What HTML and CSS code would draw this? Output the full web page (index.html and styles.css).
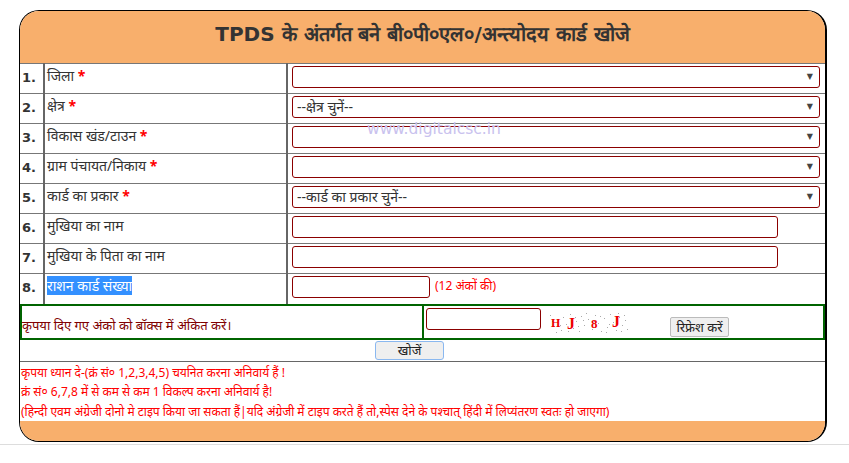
FILE: index.html
```html
<!DOCTYPE html>
<html lang="hi">
<head>
<meta charset="utf-8">
<title>TPDS कार्ड खोजे</title>
<link rel="stylesheet" href="styles.css">
</head>
<body>
<div class="wrap">
  <div class="head">TPDS के अंतर्गत बने बी०पी०एल०/अन्त्योदय कार्ड खोजे</div>
  <table class="form">
    <colgroup><col class="c-num"><col class="c-label"><col class="c-field"></colgroup>
    <tr class="row">
      <td class="num">1.</td>
      <td class="label">जिला <span class="req">*</span></td>
      <td class="field"><div class="sel"><div class="sel-box"></div></div></td>
    </tr>
    <tr class="row">
      <td class="num">2.</td>
      <td class="label">क्षेत्र <span class="req">*</span></td>
      <td class="field"><div class="sel"><div class="sel-box">--क्षेत्र चुनें--</div></div></td>
    </tr>
    <tr class="row">
      <td class="num">3.</td>
      <td class="label">विकास खंड/टाउन <span class="req">*</span></td>
      <td class="field"><div class="sel"><div class="sel-box"></div></div></td>
    </tr>
    <tr class="row">
      <td class="num">4.</td>
      <td class="label">ग्राम पंचायत/निकाय <span class="req">*</span></td>
      <td class="field"><div class="sel"><div class="sel-box"></div></div></td>
    </tr>
    <tr class="row">
      <td class="num">5.</td>
      <td class="label">कार्ड का प्रकार <span class="req">*</span></td>
      <td class="field"><div class="sel"><div class="sel-box">--कार्ड का प्रकार चुनें--</div></div></td>
    </tr>
    <tr class="row">
      <td class="num">6.</td>
      <td class="label">मुखिया का नाम</td>
      <td class="field"><div class="txt txt-wide"></div></td>
    </tr>
    <tr class="row">
      <td class="num">7.</td>
      <td class="label">मुखिया के पिता का नाम</td>
      <td class="field"><div class="txt txt-wide"></div></td>
    </tr>
    <tr class="row">
      <td class="num">8.</td>
      <td class="label"><span class="hl">राशन कार्ड संख्या</span></td>
      <td class="field"><div class="row8"><div class="txt txt-short"></div><span class="hint">(12 अंकों की)</span></div></td>
    </tr>
    <tr>
      <td colspan="3" class="cap-cell">
        <div class="cap">
          <div class="cap-left">कृपया दिए गए अंको को बॉक्स में अंकित करें।</div>
          <div class="cap-right">
            <div class="txt txt-cap"></div>
            <svg class="cap-img" width="82" height="22" viewBox="0 0 82 22">
              <g fill="#aaa">
                <rect x="2" y="3" width="1" height="1"/><rect x="6" y="14" width="1" height="1"/><rect x="10" y="8" width="1" height="1"/>
                <rect x="13" y="18" width="1" height="1"/><rect x="15" y="5" width="1" height="1"/><rect x="18" y="12" width="1" height="1"/>
                <rect x="22" y="2" width="1" height="1"/><rect x="25" y="16" width="1" height="1"/><rect x="28" y="9" width="1" height="1"/>
                <rect x="31" y="19" width="1" height="1"/><rect x="33" y="4" width="1" height="1"/><rect x="36" y="13" width="1" height="1"/>
                <rect x="40" y="7" width="1" height="1"/><rect x="44" y="17" width="1" height="1"/><rect x="47" y="3" width="1" height="1"/>
                <rect x="50" y="11" width="1" height="1"/><rect x="53" y="19" width="1" height="1"/><rect x="56" y="6" width="1" height="1"/>
                <rect x="59" y="15" width="1" height="1"/><rect x="62" y="2" width="1" height="1"/><rect x="65" y="10" width="1" height="1"/>
                <rect x="68" y="18" width="1" height="1"/><rect x="71" y="5" width="1" height="1"/><rect x="74" y="13" width="1" height="1"/>
                <rect x="77" y="8" width="1" height="1"/><rect x="79" y="17" width="1" height="1"/><rect x="8" y="20" width="1" height="1"/>
                <rect x="20" y="19" width="1" height="1"/><rect x="38" y="1" width="1" height="1"/><rect x="58" y="20" width="1" height="1"/>
                <rect x="70" y="1" width="1" height="1"/><rect x="46" y="9" width="1" height="1"/><rect x="27" y="5" width="1" height="1"/>
                <rect x="4" y="9" width="1" height="1"/><rect x="12" y="13" width="1" height="1"/><rect x="30" y="14" width="1" height="1"/>
                <rect x="35" y="8" width="1" height="1"/><rect x="52" y="4" width="1" height="1"/><rect x="61" y="12" width="1" height="1"/>
                <rect x="73" y="19" width="1" height="1"/><rect x="76" y="3" width="1" height="1"/><rect x="24" y="10" width="1" height="1"/>
              </g>
              <g fill="#e00" font-family="Liberation Serif, serif" font-weight="bold">
                <text x="3" y="15" font-size="12">H</text>
                <text x="19" y="17" font-size="16">J</text>
                <text x="43" y="16" font-size="13">8</text>
                <text x="64" y="15" font-size="16">J</text>
              </g>
            </svg>
            <button class="btn btn-refresh" type="button">रिफ्रेश करें</button>
          </div>
        </div>
      </td>
    </tr>
    <tr>
      <td colspan="3" class="submit-cell"><button class="btn btn-search" type="button">खोजें</button></td>
    </tr>
    <tr>
      <td colspan="3" class="notes">
        <p>कृपया ध्यान दे-(क्रं सं० 1,2,3,4,5) चयनित करना अनिवार्य हैं !</p>
        <p>क्रं सं० 6,7,8 में से कम से कम 1 विकल्प करना अनिवार्य है!</p>
        <p>(हिन्दी एवम अंग्रेजी दोनो मे टाइप किया जा सकता हैं|यदि अंग्रेजी में टाइप करते हैं तो,स्पेस देने के पश्चात् हिंदी में लिप्यंतरण स्वतः हो जाएगा)</p>
      </td>
    </tr>
  </table>
  <div class="foot"></div>
</div>
<div class="rule"></div>
<div class="watermark">www.digitalcsc.in</div>
</body>
</html>
```

FILE: styles.css
```css
html, body {
  margin: 0;
  padding: 0;
  background: #fff;
}
body {
  font-family: "Noto Sans", "DejaVu Sans", sans-serif;
  color: #333;
  position: relative;
}
.wrap {
  width: 808px;
  margin: 10px 0 0 19px;
  box-sizing: border-box;
  border: 1px solid #000;
  border-right-width: 2px;
  border-radius: 20px;
  overflow: hidden;
}
.head {
  background: #f8af6c;
  height: 52px;
  line-height: 46px;
  text-align: center;
  font-family: "DejaVu Sans", sans-serif;
  font-weight: bold;
  font-size: 20px;
  color: #333;
}
.form {
  width: 100%;
  border-collapse: collapse;
  table-layout: fixed;
}
.c-num { width: 24px; }
.c-label { width: 243px; }
.form td {
  padding: 0;
  vertical-align: top;
  box-sizing: border-box;
}
.row {
  height: 30px;
}
.row td {
  height: 30px;
  border-top: 1px solid #777;
}
.num {
  font-family: "DejaVu Sans", sans-serif;
  font-weight: bold;
  font-size: 13px;
  line-height: 18px;
  padding: 5px 0 0 2px !important;
  border-right: 2px solid #666;
}
.label {
  font-size: 14px;
  line-height: 20px;
  padding: 2px 0 0 2px !important;
  border-right: 2px solid #666;
  white-space: nowrap;
  overflow: hidden;
}
.req {
  color: #f00;
  font-weight: bold;
}
.hl {
  background: #3390ff;
  color: #fff;
}
.field {
  padding: 2px 0 0 4px !important;
}
.sel {
  position: relative;
  width: 528px;
}
.sel-box {
  height: 20px;
  border: 1px solid #8b0000;
  border-radius: 3px;
  font-size: 14px;
  line-height: 20px;
  padding-left: 4px;
  color: #333;
  overflow: hidden;
}
.sel::after {
  content: "▼";
  position: absolute;
  right: 7px;
  top: 5px;
  font-size: 8px;
  line-height: 10px;
  color: #444;
}
.txt {
  height: 20px;
  border: 1px solid #8b0000;
  border-radius: 3px;
  background: #fff;
}
.txt-wide { width: 484px; }
.txt-short { width: 136px; }
.row8 {
  display: flex;
  align-items: flex-start;
  gap: 5px;
}
.hint {
  color: #f00;
  font-size: 12px;
  line-height: 20px;
}
.cap {
  display: flex;
  border: 2px solid #006400;
  height: 32px;
}
.cap-left {
  width: 402px;
  border-right: 2px solid #006400;
  color: #800000;
  font-size: 13px;
  line-height: 18px;
  padding: 10px 0 0 0;
  box-sizing: border-box;
}
.cap-right {
  display: flex;
  align-items: flex-start;
  padding: 2px 0 0 2px;
}
.txt-cap {
  width: 113px;
}
.cap-img {
  margin: 4px 0 0 7px;
  display: block;
}
.btn {
  font-family: "Noto Sans", "DejaVu Sans", sans-serif;
  font-size: 13px;
  color: #222;
  background: #efefef;
  border: 1px solid #bbb;
  border-radius: 2px;
  padding: 0;
}
.btn-refresh {
  width: 59px;
  height: 20px;
  line-height: 18px;
  margin: 9px 0 0 40px;
}
.form td.submit-cell {
  height: 22px;
  padding: 1px 0 0 0;
  line-height: 0;
}
.btn-search {
  display: block;
  margin-left: 355px;
  width: 69px;
  height: 19px;
  line-height: 17px;
  border-color: #8ab8f0;
  border-radius: 3px;
}
.form td.notes {
  padding: 1px 0 0 1px;
  border-top: 1px solid #666;
}
.notes p {
  margin: 0;
  color: #f00;
  font-size: 12px;
  line-height: 19.3px;
}
.foot {
  background: #f8af6c;
  height: 20px;
}
.rule {
  margin-top: 2px;
  height: 1px;
  background: #ddd;
}
.watermark {
  position: absolute;
  left: 367px;
  top: 120px;
  font-family: "DejaVu Sans", sans-serif;
  font-size: 15.5px;
  color: #c9c2ee;
}
```
